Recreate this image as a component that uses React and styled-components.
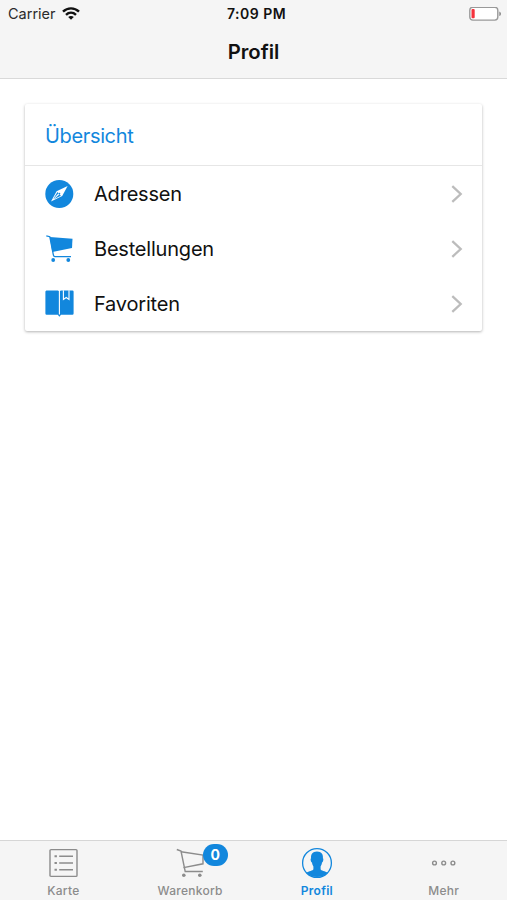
import React from 'react';
import styled, { createGlobalStyle } from 'styled-components';

const BLUE = '#1287dd';

const GlobalStyle = createGlobalStyle`
  * {
    box-sizing: border-box;
  }
  body {
    margin: 0;
    background: #fff;
    color: #111;
    font-family: Inter, "Liberation Sans", sans-serif;
  }
  svg {
    display: block;
    flex: none;
  }
`;

const Screen = styled.div`
  display: flex;
  flex-direction: column;
  height: 900px;
`;

const Header = styled.header`
  height: 79px;
  background: #f5f5f5;
  border-bottom: 1px solid #d9d9d9;
`;

const StatusBar = styled.div`
  display: grid;
  grid-template-columns: 1fr auto 1fr;
  align-items: center;
  height: 27px;
  padding: 0 5px 0 8px;
`;

const Carrier = styled.div`
  display: flex;
  align-items: center;
  gap: 6px;
  font-size: 14.5px;
  color: #2a2a2a;
`;

const Clock = styled.div`
  padding-left: 3px;
  font-size: 14px;
  font-weight: 600;
  letter-spacing: 0.5px;
`;

const Battery = styled.div`
  display: flex;
  justify-content: flex-end;
`;

const Title = styled.h1`
  margin: 0;
  font-size: 20.3px;
  font-weight: 600;
  line-height: 50px;
  text-align: center;
`;

const Content = styled.main`
  flex: 1;
  padding: 25px 25px 0;
`;

const Card = styled.section`
  height: 227px;
  background: #fff;
  border-radius: 2px;
  box-shadow: 0 1px 3px rgba(0, 0, 0, 0.3);
`;

const CardHeader = styled.h2`
  height: 62px;
  margin: 0;
  padding: 0 20px;
  border-bottom: 1px solid #e6e6e6;
  color: ${BLUE};
  font-size: 20px;
  font-weight: 400;
  line-height: 64px;
  letter-spacing: -0.35px;
`;

const Row = styled.a`
  display: flex;
  align-items: center;
  height: 55px;
  padding: 0 19px 0 20px;
`;

const RowLabel = styled.span`
  flex: 1;
  margin-left: 19px;
  font-size: 20px;
  letter-spacing: -0.2px;
`;

const TabBar = styled.nav`
  display: grid;
  grid-template-columns: repeat(4, 1fr);
  height: 60px;
  background: #f5f5f5;
  border-top: 1px solid #d6d6d6;
`;

const Tab = styled.a`
  position: relative;
  display: flex;
  flex-direction: column;
  align-items: center;
  padding-top: 6px;
  color: ${({ $active }) => ($active ? BLUE : '#8c8c8c')};
  font-weight: ${({ $active }) => ($active ? 600 : 500)};
`;

const TabLabel = styled.span`
  margin-top: 4px;
  font-size: 12px;
  line-height: 16px;
  letter-spacing: 0.25px;
`;

const Badge = styled.span`
  position: absolute;
  top: 3px;
  left: 76px;
  width: 25px;
  height: 22px;
  border-radius: 11px;
  background: ${BLUE};
  color: #fff;
  font-size: 14px;
  font-weight: 700;
  line-height: 22px;
  text-align: center;
`;

const WifiIcon = () => (
  <svg width="18" height="14" viewBox="0 0 18 14" fill="none" stroke="#111" strokeWidth="2.4">
    <path d="M1 4.6C5.5 .3 12.5 .3 17 4.6" />
    <path d="M4 7.8c2.9-2.7 7.1-2.7 10 0" />
    <path d="M9 12.8 6.2 10c1.6-1.4 4-1.4 5.6 0z" fill="#111" stroke="none" />
  </svg>
);

const BatteryIcon = () => (
  <svg width="33" height="14" viewBox="0 0 33 14">
    <rect x=".8" y=".3" width="28" height="12.8" rx="3" fill="#fff" stroke="#999" strokeWidth="1.4" />
    <rect x="2.5" y="2.1" width="3.2" height="9.2" rx="1" fill="#f5333d" />
    <path d="M30.3 4.4c2.2.8 2.2 3.8 0 4.6z" fill="#888" />
  </svg>
);

const CompassIcon = () => (
  <svg width="30" height="30" viewBox="0 0 30 30">
    <circle cx="14.3" cy="15" r="14" fill={BLUE} />
    <path d="M22.6 7 17.2 17 6 22.4l5.6-10.2z" fill="#fff" />
    <path d="m8.1 20.3 4.4-7.2 1 1.1z" fill={BLUE} />
    <path d="m8.8 20.2 5.8-4.9 1.3 1.4z" fill={BLUE} />
    <circle cx="14.4" cy="14.6" r=".9" fill={BLUE} />
  </svg>
);

const CartIcon = () => (
  <svg width="30" height="30" viewBox="0 0 30 30" fill={BLUE}>
    <path d="M1.3 1.8 4.8 2.7 8.4 21.2q.3 1.4 1.6 1.4h16" fill="none" stroke={BLUE} strokeWidth="1.3" />
    <path d="M4.8 2.9 27.5 4.7 27 14 7.3 18z" />
    <circle cx="8.2" cy="26" r="1.9" />
    <circle cx="23.3" cy="26" r="1.9" />
  </svg>
);

const BookIcon = () => (
  <svg width="30" height="30" viewBox="0 0 30 30">
    <path
      d="M2 1.4h10.8l1.6.8 1.6-.8h11.4a1.2 1.2 0 0 1 1.2 1.2v22a1.2 1.2 0 0 1-1.2 1.2H16l-1.6 2-1.6-2H1.6a1.2 1.2 0 0 1-1.2-1.2V2.8C.4 2 1 1.4 2 1.4z"
      fill={BLUE}
    />
    <path d="M14.4 2v23.5M18.4 1.2v9.3l2.8-2 2.8 2V1.2" fill="none" stroke="#fff" strokeWidth="1.1" />
  </svg>
);

const ChevronIcon = () => (
  <svg width="12" height="18" viewBox="0 0 12 18" fill="none" stroke="#bcbcbc" strokeWidth="2.3">
    <path d="m1.3 1.2 8.4 7.8-8.4 7.8" />
  </svg>
);

const ListIcon = () => (
  <svg width="32" height="32" viewBox="0 0 32 32" fill="none" stroke="currentColor">
    <rect x="3" y="2.6" width="27" height="26.8" rx="1" strokeWidth="1.4" />
    <path d="M12.2 9.3H26M12.2 16H26M12.2 22.8H26" strokeWidth="1.5" />
    <path d="M7.5 9.3h2.4M7.5 16h2.4M7.5 22.8h2.4" strokeWidth="2" />
  </svg>
);

const CartOutlineIcon = () => (
  <svg width="32" height="32" viewBox="0 0 32 32" fill="none" stroke="currentColor" strokeWidth="1.4">
    <path d="m2.8 2.5 4.2 1.6 4.2 20.4h17.6" />
    <path d="m7 4.8 22 3.2v8.8L9.5 20.6" />
    <g fill="currentColor" stroke="none">
      <circle cx="9.8" cy="28.2" r="1.8" />
      <circle cx="25.8" cy="28.2" r="1.8" />
    </g>
  </svg>
);

const ProfileIcon = () => (
  <svg width="32" height="32" viewBox="0 0 32 32">
    <circle cx="16" cy="16" r="14.4" fill="none" stroke="currentColor" strokeWidth="1.3" />
    <path
      d="M16 4.4c-4.6 0-6.4 3-5.9 6.9-.9.3-.4 3.9.9 4.3.2 1.8.7 2.9 1.4 3.8v2.8c-.3 1.5-4.6 1.9-7.2 3.5C10.8 31.4 21.2 31.4 26.8 25.7c-2.6-1.6-6.9-2-7.2-3.5v-2.8c.7-.9 1.2-2 1.4-3.8 1.3-.4 1.8-4 .9-4.3.5-3.9-1.3-6.9-5.9-6.9z"
      fill="currentColor"
    />
  </svg>
);

const MoreIcon = () => (
  <svg width="32" height="32" viewBox="0 0 32 32" fill="none" stroke="currentColor" strokeWidth="1.4">
    <circle cx="6.5" cy="16" r="1.9" />
    <circle cx="15.7" cy="16" r="1.9" />
    <circle cx="24.9" cy="16" r="1.9" />
  </svg>
);

const rows = [
  { label: 'Adressen', Icon: CompassIcon },
  { label: 'Bestellungen', Icon: CartIcon },
  { label: 'Favoriten', Icon: BookIcon },
];

const tabs = [
  { label: 'Karte', Icon: ListIcon },
  { label: 'Warenkorb', Icon: CartOutlineIcon, badge: '0' },
  { label: 'Profil', Icon: ProfileIcon, active: true },
  { label: 'Mehr', Icon: MoreIcon },
];

const App = () => {
  return (
    <Screen>
      <GlobalStyle />
      <Header>
        <StatusBar>
          <Carrier>Carrier <WifiIcon /></Carrier>
          <Clock>7:09 PM</Clock>
          <Battery><BatteryIcon /></Battery>
        </StatusBar>
        <Title>Profil</Title>
      </Header>
      <Content>
        <Card>
          <CardHeader>Übersicht</CardHeader>
          {rows.map(({ label, Icon }) => (
            <Row key={label}>
              <Icon />
              <RowLabel>{label}</RowLabel>
              <ChevronIcon />
            </Row>
          ))}
        </Card>
      </Content>
      <TabBar>
        {tabs.map(({ label, Icon, badge, active }) => (
          <Tab key={label} $active={active}>
            <Icon />
            {badge && <Badge>{badge}</Badge>}
            <TabLabel>{label}</TabLabel>
          </Tab>
        ))}
      </TabBar>
    </Screen>
  );
};

export default App;
